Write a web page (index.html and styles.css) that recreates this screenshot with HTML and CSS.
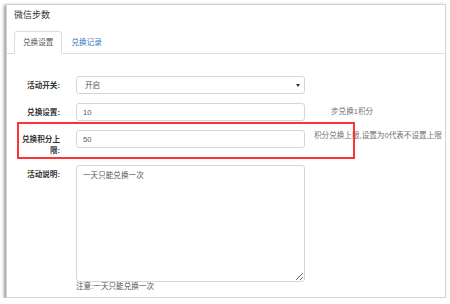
FILE: index.html
```html
<!DOCTYPE html>
<html lang="zh-CN">
<head>
    <meta charset="UTF-8">
    <meta name="viewport" content="width=device-width, initial-scale=1.0">
    <title>微信步数</title>
    <link rel="stylesheet" href="styles.css">
</head>
<body>
    <div class="panel">
        <div class="panel-title">微信步数</div>

        <ul class="tabs">
            <li class="tab active">兑换设置</li>
            <li class="tab">兑换记录</li>
        </ul>

        <form class="form">
            <div class="row">
                <label class="label">活动开关:</label>
                <span class="select-wrap">
                    <select class="control">
                        <option>开启</option>
                        <option>关闭</option>
                    </select>
                </span>
            </div>

            <div class="row">
                <label class="label">兑换设置:</label>
                <input class="control" type="text" value="10">
                <span class="help help-wide">步兑换1积分</span>
            </div>

            <div class="row marked">
                <label class="label">兑换积分上限:</label>
                <input class="control" type="text" value="50">
                <span class="help help-top">积分兑换上限,设置为0代表不设置上限</span>
                <div class="mark-box"></div>
            </div>

            <div class="row">
                <label class="label">活动说明:</label>
                <div class="field">
                    <textarea class="control textarea">一天只能兑换一次</textarea>
                    <div class="note">注意:一天只能兑换一次</div>
                </div>
            </div>
        </form>
    </div>
</body>
</html>
```

FILE: styles.css
```css
body {
    margin: 0;
    background: #fff;
    font-family: "Liberation Sans", "Noto Sans CJK SC", sans-serif;
    font-size: 7.6px;
    color: #333;
}
.panel {
    box-sizing: border-box;
    width: 440px;
    height: 294px;
    margin: 4px 0 0 6px;
    border: 1px solid #d4d4d4;
    box-shadow: -2px 1px 3px #9a9a9a;
    background: #fff;
}
.panel-title {
    padding: 4px 0 0 7px;
    font-size: 9px;
    line-height: 12px;
    height: 12px;
    margin-bottom: 10px;
    color: #333;
}
.tabs {
    list-style: none;
    margin: 0;
    padding: 0 0 0 7px;
    display: flex;
    border-bottom: 1px solid #ddd;
}
.tab {
    padding: 5px 8px;
    line-height: 11px;
    border: 1px solid transparent;
    border-radius: 3px 3px 0 0;
    margin-bottom: -1px;
    color: #337ab7;
}
.tab.active {
    color: #555;
    background: #fff;
    border-color: #ddd #ddd transparent;
}
.form {
    margin: 0;
    padding: 22px 0 0 13px;
}
.row {
    display: flex;
    align-items: flex-start;
    margin-bottom: 9px;
}
.marked {
    position: relative;
}
.label {
    width: 40px;
    margin-right: 16px;
    padding-top: 4px;
    line-height: 11px;
    text-align: right;
    font-weight: bold;
    color: #333;
}
.control {
    box-sizing: border-box;
    width: 229px;
    height: 18px;
    margin: 0;
    padding: 0 6px;
    border: 1px solid #d6d6d6;
    border-radius: 3px;
    font-family: inherit;
    font-size: 7.6px;
    color: #555;
    background: #fff;
    outline: none;
}
.select-wrap {
    position: relative;
    display: block;
}
.select-wrap select {
    appearance: none;
    -webkit-appearance: none;
    padding-left: 8px;
}
.select-wrap::after {
    content: "";
    position: absolute;
    right: 5px;
    top: 8px;
    border-left: 2px solid transparent;
    border-right: 2px solid transparent;
    border-top: 3px solid #333;
}
.help {
    color: #6f6f6f;
    line-height: 10px;
    margin-left: 9px;
}
.help-wide {
    margin-left: 26px;
    padding-top: 4px;
}
.help-top {
    padding-top: 1px;
}
.mark-box {
    position: absolute;
    left: -3px;
    top: -8px;
    width: 338px;
    height: 37px;
    box-sizing: border-box;
    border: 2px solid #f33;
}
.field {
    display: flex;
    flex-direction: column;
}
.textarea {
    height: 117px;
    padding: 4px 6px;
    line-height: 11px;
    resize: both;
}
.note {
    line-height: 10px;
    color: #555;
}
```
